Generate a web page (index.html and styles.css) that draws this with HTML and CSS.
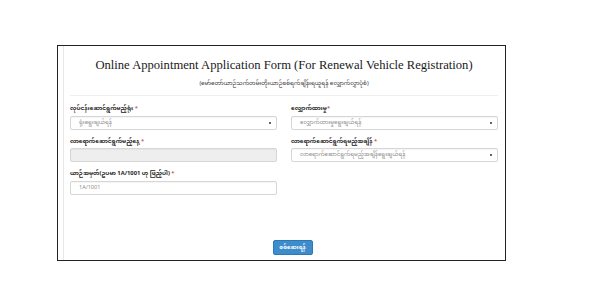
FILE: index.html
```html
<!DOCTYPE html>
<html lang="my">
<head>
    <meta charset="UTF-8">
    <title>Online Appointment Application Form</title>
    <link rel="stylesheet" href="styles.css">
</head>
<body>
    <div class="frame">
        <div class="card">
            <div class="heading">
                <h1>Online Appointment Application Form (For Renewal Vehicle Registration)</h1>
                <p class="subtitle">(မော်တော်ယာဉ်သက်တမ်းတိုးယာဉ်စစ်ရက်ချိန်းရယူရန် လျှောက်လွှာပုံစံ)</p>
            </div>

            <form class="form-grid">
                <div class="field">
                    <label>လုပ်ငန်းဆောင်ရွက်မည့်ရုံး <span class="req">*</span></label>
                    <div class="select"><span>ရုံးရွေးချယ်ရန်</span><i class="caret"></i></div>
                </div>
                <div class="field">
                    <label>လျှောက်ထားမှု<span class="req">*</span></label>
                    <div class="select"><span>လျှောက်ထားမှုရွေးချယ်ရန်</span><i class="caret"></i></div>
                </div>
                <div class="field">
                    <label>လာရောက်ဆောင်ရွက်မည့်နေ့ <span class="req">*</span></label>
                    <div class="input disabled"></div>
                </div>
                <div class="field">
                    <label>လာရောက်ဆောင်ရွက်ရမည့်အချိန် <span class="req">*</span></label>
                    <div class="select"><span>လာရောက်ဆောင်ရွက်ရမည့်အချိန်ရွေးချယ်ရန်</span><i class="caret"></i></div>
                </div>
                <div class="field">
                    <label>ယာဉ်အမှတ်(ဥပမာ 1A/1001 ဟု ဖြည့်ပါ) <span class="req">*</span></label>
                    <div class="input"><span>1A/1001</span></div>
                </div>
            </form>

            <div class="actions">
                <button type="button" class="btn">စစ်ဆေးရန်</button>
            </div>
        </div>
    </div>
</body>
</html>
```

FILE: styles.css
```css
body {
    margin: 0;
    background: #ffffff;
    font-family: "Noto Sans Myanmar", "Padauk", "Myanmar Text", "DejaVu Sans", sans-serif;
    color: #333333;
}

.frame {
    box-sizing: border-box;
    width: 449px;
    height: 216px;
    margin: 45px 0 0 57px;
    border: 1.5px solid #222222;
    padding-left: 5px;
}

.card {
    height: 100%;
    border-left: 1px solid #e8e8e8;
    padding: 0 7px 0 6px;
    display: flex;
    flex-direction: column;
}

.heading {
    text-align: center;
    padding-top: 12px;
    padding-bottom: 7px;
    border-bottom: 1px solid #eeeeee;
}

h1 {
    margin: 0;
    font-family: "Liberation Serif", serif;
    font-weight: normal;
    font-size: 12.6px;
    line-height: 14px;
    color: #1a1a1a;
    white-space: nowrap;
}

.subtitle {
    margin: 8px 0 0;
    font-size: 5.7px;
    line-height: 8px;
    color: #333333;
}

.form-grid {
    display: grid;
    grid-template-columns: 207px 207px;
    column-gap: 14px;
    row-gap: 7px;
    margin-top: 8px;
}

.field label {
    display: block;
    font-size: 5.8px;
    font-weight: bold;
    line-height: 10px;
    color: #222222;
    margin-bottom: 1.5px;
}

.req {
    color: #d9534f;
}

.select, .input {
    box-sizing: border-box;
    height: 14px;
    border: 1px solid #d6d6d6;
    border-radius: 2px;
    display: flex;
    align-items: center;
    justify-content: space-between;
    padding: 0 5px 0 8px;
    font-size: 5.5px;
    color: #8a8a8a;
    box-shadow: inset 0 1px 1px rgba(0, 0, 0, 0.04);
}

.input.disabled {
    background: #eeeeee;
}

.caret {
    width: 2px;
    height: 2px;
    background: #666666;
}

.actions {
    margin-top: auto;
    padding-bottom: 5px;
    display: flex;
    justify-content: center;
    padding-left: 17px;
}

.btn {
    width: 40px;
    height: 15px;
    padding: 0;
    border: 1px solid #2f78b5;
    border-radius: 2px;
    background: #3d8ccc;
    color: #ffffff;
    font-family: inherit;
    font-size: 5.5px;
    font-weight: bold;
}
```
